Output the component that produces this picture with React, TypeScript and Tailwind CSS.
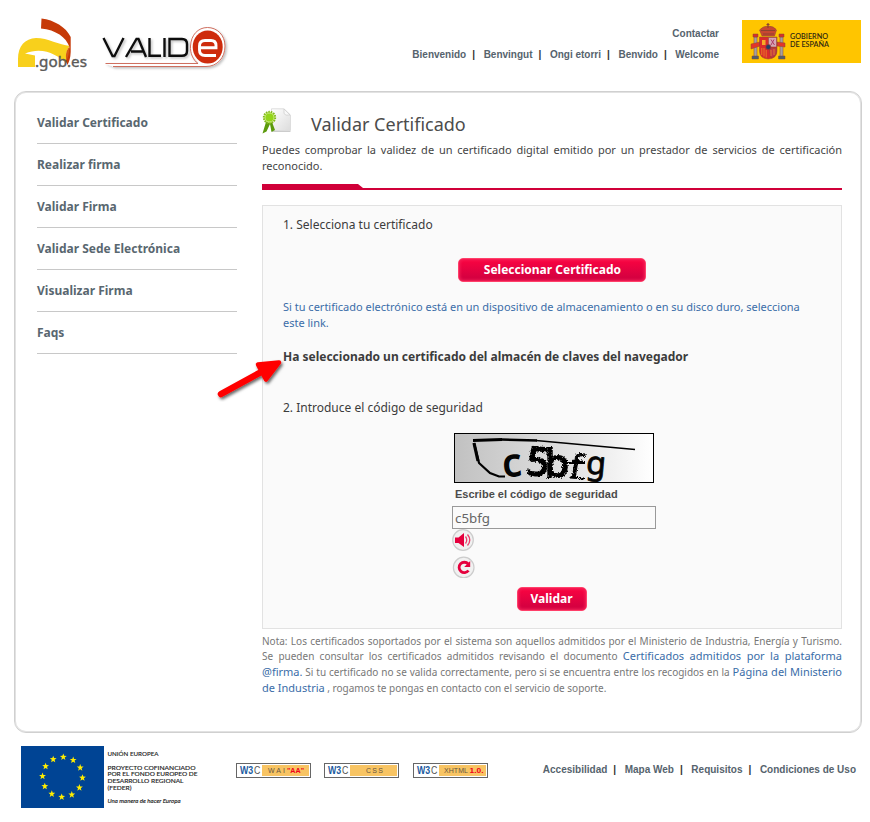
import React from "react";

const menu = ["Validar Certificado", "Realizar firma", "Validar Firma", "Validar Sede Electrónica", "Visualizar Firma", "Faqs"];
const sans = "font-['Noto_Sans',sans-serif]";
const arial = "font-['Liberation_Sans',Arial,sans-serif]";

function GobLogo() {
  return (
    <svg width="72" height="54" viewBox="16 17 72 54" className="block">
      <path d="M18 67 L18 59 C18 46 25 38.500 36 38 C48 38 59 45 70 46 C66 50 65.500 56 66.500 63 C57 55 43 46 25 53.500 L35 55.500 L35 67Z" fill="#f8d01c" />
      <path d="M41.500 18.500 C54 20 66 27 70.700 37 V52 C70.500 58 69 62 67.500 65 L65.800 61 L69.500 47 C66 37 56 30 41 28.500Z" fill="#c63a08" />
      <path d="M69.500 46.500 C65.500 51 65.500 56 66.500 61 L68.500 55Z" fill="#d75a12" />
      <text x="35" y="66.500" fontSize="15" textLength="52" lengthAdjust="spacingAndGlyphs" fill="#5b5a58" stroke="#5b5a58" strokeWidth="0.400" fontFamily="Noto Sans">.gob.es</text>
    </svg>
  );
}

function ValideLogo() {
  return (
    <svg width="128" height="50" viewBox="102 24 128 50" className="block">
      <defs>
        <filter id="logoShadow" x="-20%" y="-20%" width="150%" height="150%"><feDropShadow dx="1.500" dy="1.500" stdDeviation="0.800" floodOpacity="0.250" /></filter>
      </defs>
      <g filter="url(#logoShadow)">
        <path d="M105.500 63.500 H199 L194 57 C191 53 190 50 190 46 C190 35 197 28 207.500 28 C218 28 225 36 225 46 C225 58 218 66.500 207 66.500 H113" fill="#fff" stroke="none" />
        <path d="M105.500 63.500 H198 M198 63.500 C193 60 190 53 190.500 46 C191 35 198 27.500 207.500 27.500 C217 27.500 225 35 225 46 C225 58 217 66.500 206 66.500 H113" fill="none" stroke="#c9604f" strokeWidth="0.900" />
        <g fill="none" stroke="#111" strokeWidth="2.400">
          <path d="M103.500 38 L112.500 56 H114.500 L123.500 38" />
          <path d="M126 57 L136.500 39 H138.500 L146 57 M131 51.500 H143" />
          <path d="M149.500 38 V55.800 H161 M164.500 38 V57 M169.500 39 H182 Q187 39 187 44 V51 Q187 55.800 182 55.800 H169.500Z" />
        </g>
      </g>
      <ellipse cx="207.700" cy="47" rx="15" ry="16.500" fill="#ce2c0d" />
      <path d="M200 47.800 H216 V45.500 Q216 40.500 211 40.500 H205 Q199.500 40.500 199.500 46 V50 Q199.500 55.500 205 55.500 H216" fill="none" stroke="#fff" strokeWidth="2.900" />
    </svg>
  );
}

function SpainLogo() {
  return (
    <svg width="119" height="43" viewBox="0 0 119 43" className="block bg-[#ffc500]">
      <g stroke="#8b4932" strokeWidth="0.500">
        <path d="M12 17 H15 V37 H12Z M38 17 H41 V37 H38Z" fill="#a6a0a0" />
        <path d="M10 36 H16.500 V39 H10Z M36.500 36 H43 V39 H36.500Z" fill="#4d606d" />
        <path d="M11 14 H16 V17 H11Z M37 14 H42 V17 H37Z" fill="#d63029" />
        <path d="M9 24 L18 22 V26 L9 29Z M35 22 L43 23 V27 L35 26Z" fill="#e33627" />
        <path d="M17.500 17 H35 V31 Q35 38.500 26.200 39 Q17.500 38.500 17.500 31Z" fill="#d92b2c" />
        <path d="M26.500 17.500 H34.500 V27 H26.500Z" fill="#d5a6b5" />
        <path d="M27 28 H34.500 V32 Q34 36 29 38Z" fill="#c13945" />
        <path d="M20 16 L17.500 10 Q21 6 26 6 Q32 6 34.500 10 L32.500 16Z" fill="#c84730" />
      </g>
      <path d="M26 3 V8 M24.500 4.500 H27.500 M19 10.500 H33 M21 14 H32" stroke="#8d432e" strokeWidth="1.200" />
      <path d="M20 20 H23.500 V25 H20Z" fill="#f8a927" />
      <path d="M29 19.500 L32.500 25 M32 19.500 L29 25" stroke="#b03b64" />
      <path d="M19.800 28 V35 M22 28 V36.500 M24.200 30 V37.500 M29 30 V36 M32 29 V35" stroke="#f19a23" strokeWidth="0.700" />
      <circle cx="26.300" cy="27" r="2.500" fill="#213f67" stroke="#a43534" strokeWidth="0.700" />
      <g fontFamily="Lato" fontSize="6.800" fontWeight="600" fill="#302812">
        <text x="48" y="19" textLength="38" lengthAdjust="spacingAndGlyphs">GOBIERNO</text>
        <text x="48" y="26.700" textLength="39" lengthAdjust="spacingAndGlyphs">DE ESPAÑA</text>
      </g>
    </svg>
  );
}

function CertificateIcon() {
  return (
    <svg width="30" height="28" viewBox="0 0 30 28" className="block">
      <defs><linearGradient id="paper" x1="0" y1="0" x2="1" y2="1"><stop stopColor="#fff" /><stop offset="1" stopColor="#dcdcdc" /></linearGradient></defs>
      <path d="M9.500 .8 H22 L28.500 7 V22.500 H9.500Z" fill="url(#paper)" stroke="#ddd" />
      <path d="M22 1 V5.500 Q23 8 28 7Z" fill="#f8f8f8" stroke="#ccc" strokeWidth="0.700" />
      <path d="M10 23.500 H28.500" stroke="#ccc" />
      <path d="M4 14 L.5 25.500 L4.500 23.500 L8 16 L9.500 24 L13 22 L10 14Z" fill="#5b9a0c" />
      <circle cx="7.500" cy="9.500" r="5.700" fill="#cbec82" stroke="#83b91c" strokeWidth="2" strokeDasharray="1.500 1" />
      <circle cx="7.500" cy="9.500" r="4" fill="#94d51b" />
    </svg>
  );
}

function Captcha() {
  return (
    <svg width="200" height="50" viewBox="0 0 200 50" className="block overflow-visible">
      <defs>
        <linearGradient id="cap"><stop stopColor="#c1c1c1" /><stop offset="0.500" stopColor="#ddd" /><stop offset="1" stopColor="#fff" /></linearGradient>
        <filter id="rough" x="-20%" y="-20%" width="140%" height="140%"><feTurbulence type="fractalNoise" baseFrequency="0.700" numOctaves="2" seed="4" /><feDisplacementMap in="SourceGraphic" scale="4" xChannelSelector="R" yChannelSelector="G" /></filter>
      </defs>
      <rect x="0.500" y="0.500" width="199" height="49" fill="url(#cap)" stroke="#000" />
      <path d="M19 7.500 L48 6.500" stroke="#000" strokeWidth="3.200" />
      <path d="M47 6.500 L83 7.500" stroke="#000" strokeWidth="2.500" />
      <path d="M82 7.500 L181 16.500" stroke="#000" strokeWidth="1.700" />
      <path d="M20 10 L25 30 L36 40 L45 43.500 H51" fill="none" stroke="#000" strokeWidth="2.200" />
      <path d="M20 10 L24 28" stroke="#000" strokeWidth="3.200" />
      <g fontFamily="Noto Sans" fill="#050505" stroke="#050505">
        <text x="49" y="43" fontSize="38" strokeWidth="1.600" transform="rotate(-4 58 35)">c</text>
        <g filter="url(#rough)">
          <text x="73" y="42" fontSize="39" strokeWidth="2" transform="rotate(6 81 28)">5</text>
          <text x="91" y="44" fontSize="39" strokeWidth="2">b</text>
          <text x="117" y="45" fontSize="33" strokeWidth="1" transform="rotate(9 122 31)">f</text>
          <path d="M115 30 H131 M116 44.500 L131 45.500" strokeWidth="1.800" />
        </g>
        <text x="132" y="41" fontSize="32" strokeWidth="0.800" transform="rotate(5 140 36)">g</text>
      </g>
    </svg>
  );
}

function RoundIcon({ refresh = false }: { refresh?: boolean }) {
  return (
    <svg width="23" height="22" viewBox="0 0 23 22" className="block">
      <g transform={refresh ? "translate(0.700 0.500)" : undefined}>
        <circle cx="11" cy="11" r="10.300" fill="#f1f1f1" stroke="#ccc" strokeWidth="1.200" />
        {refresh ? (
          <><path d="M15.500 7.500 A5.200 5.200 0 1 0 15.800 14" fill="none" stroke="#e5003d" strokeWidth="2.800" /><path d="M17.500 4.500 V10.500 H11.500Z" fill="#e5003d" /></>
        ) : (
          <><path d="M3 8.500 H6.500 L12 4 V18 L6.500 14 H3Z" fill="#e5003d" /><path d="M13.500 7.500 Q16 11 13.500 14.500 M15.500 5.500 Q20 11 15.500 16.500" fill="none" stroke="#ea3f6b" strokeWidth="1.300" /></>
        )}
      </g>
    </svg>
  );
}

function RedButton({ label, size }: { label: string; size: string }) {
  return <button className={`${size} block h-6 rounded-[5px] border border-[#ff3f69] bg-linear-to-b from-[#fb0441] to-[#ce0040] text-[12px] leading-[20px] font-bold text-white shadow-[inset_0_0_3px_1px_#f6245a]`}>{label}</button>;
}

function EuropeLogo() {
  return (
    <svg width="182" height="62" viewBox="0 0 182 62" className="block">
      <rect width="83" height="62" fill="#004494" />
      {Array.from({ length: 12 }, (_, i) => {
        const a = (i * Math.PI) / 6 + 0.040;
        return <path key={i} transform={`translate(${41.5 + 20 * Math.sin(a)} ${31 - 20 * Math.cos(a)})`} d="M0 -3.600 L.9 -1.200 L3.400 -1.100 L1.400 .5 L2.100 3 L0 1.600 L-2.100 3 L-1.400 .5 L-3.400 -1.100 L-.9 -1.200Z" fill="#ffed00" />;
      })}
      <g fontFamily="Lato" fontSize="6.400" fontWeight="400" fill="#222" stroke="#222" strokeWidth="0.150">
        <text x="86.500" y="10" textLength="51" lengthAdjust="spacingAndGlyphs">UNIÓN EUROPEA</text>
        <text x="86.500" y="23.500" textLength="88" lengthAdjust="spacingAndGlyphs">PROYECTO COFINANCIADO</text>
        <text x="86.500" y="30.200" textLength="90" lengthAdjust="spacingAndGlyphs">POR EL FONDO EUROPEO DE</text>
        <text x="86.500" y="37" textLength="76" lengthAdjust="spacingAndGlyphs">DESARROLLO REGIONAL</text>
        <text x="86.500" y="43.700" textLength="24" lengthAdjust="spacingAndGlyphs">(FEDER)</text>
        <text x="86.500" y="56.800" fontSize="6.200" fontStyle="italic" textLength="73" lengthAdjust="spacingAndGlyphs">Una manera de hacer Europa</text>
      </g>
    </svg>
  );
}

function Badge({ word, red, x, width, redX = 0, redWidth = 0 }: { word: string; red?: string; x: number; width: number; redX?: number; redWidth?: number }) {
  return (
    <svg width="75" height="15" viewBox="0 0 75 15" className="block">
      <rect x="0.500" y="0.500" width="74" height="14" fill="#fff" stroke="#666" />
      <rect x="26" y="2" width="47" height="11" fill="#f8c463" />
      <g fontFamily="Liberation Sans">
        <g transform="translate(4 11.300) scale(0.800 1)" fontSize="11">
          <text fontWeight="700" fill="#1c5ba0">W3</text>
          <text x="17.500" fill="#555">C</text>
        </g>
        <text x={x} y="10" fontSize="7" fill="#665540" textLength={width}>{word}</text>
        {red && <text x={redX} y="10" fontSize="7" fontWeight="700" fill="#f00018" textLength={redWidth} lengthAdjust="spacingAndGlyphs">{red}</text>}
      </g>
    </svg>
  );
}

function LinkRow({ items }: { items: string[] }) {
  return (
    <div className="flex whitespace-pre">
      {items.map((item, i) => (
        <React.Fragment key={item}>
          <a>{item}</a>
          {i < items.length - 1 && <span className="w-[17.400px] pl-[6px] text-[#333]">|</span>}
        </React.Fragment>
      ))}
    </div>
  );
}

function Line({ children }: { children: React.ReactNode }) {
  return <div className="h-4 whitespace-nowrap [text-align-last:justify]">{children}</div>;
}

export default function App() {
  return (
    <div className={`${sans} relative h-[822px] w-[870px] overflow-hidden bg-white text-[#3c3c3c]`}>
      <header className="flex h-[91px] pl-4">
        <div className="pt-[17px]"><GobLogo /></div>
        <div className="ml-[14px] pt-6"><ValideLogo /></div>
        <div className={`${arial} ml-auto flex flex-col items-end pt-[23px] text-[10px] leading-[21px] font-bold text-[#56636d]`}>
          <a>Contactar</a>
          <LinkRow items={["Bienvenido", "Benvingut", "Ongi etorri", "Benvido", "Welcome"]} />
        </div>
        <div className="mr-[9px] ml-[23px] pt-5"><SpainLogo /></div>
      </header>

      <div className="ml-[14px] flex h-[642px] w-[848px] rounded-[12px] border border-[#d0d0d0] pt-[10px] pl-[22px] shadow-[inset_0_0_0_1px_#e2e2e2]">
        <nav className="w-[200px]">
          {menu.map((m) => <a key={m} className="block h-[42px] border-b border-[#c8c8c8] text-[12px] leading-[41px] font-bold text-[#596770]">{m}</a>)}
        </nav>
        <main className="ml-[25px] w-[580px]">
          <div className="flex h-10 pt-[6px]">
            <CertificateIcon />
            <h1 className="ml-[19px] text-[18px] leading-[33px] text-[#4c4c4c]">Validar Certificado</h1>
          </div>
          <div className="text-[11px] leading-4 text-[#444]">
            <Line>Puedes comprobar la validez de un certificado digital emitido por un prestador de servicios de certificación</Line>
            <div>reconocido.</div>
          </div>
          <svg width="580" height="6" className="mt-[10px] block"><path d="M0 0 H96 L101 4 H580 V6 H0Z" fill="#d00039" /></svg>

          <section className="mt-[15px] flex h-[424px] flex-col border border-[#e2e2e2] bg-[#fafafa] pl-5 text-[12px]">
            <div className="h-[52px] pt-[10px] leading-[18px]">1. Selecciona tu certificado</div>
            <div className="pl-[175.400px]"><RedButton label="Seleccionar Certificado" size="w-[188px]" /></div>
            <div className="mt-[17px] text-[11px] leading-4 text-[#3a6da8]">Si tu certificado electrónico está en un dispositivo de almacenamiento o en su disco duro, selecciona<br />este link.</div>
            <div className="mt-[17px] leading-[18px] font-bold">Ha seleccionado un certificado del almacén de claves del navegador</div>
            <div className="mt-[33px] leading-[18px]">2. Introduce el código de seguridad</div>
            <div className="mt-4 pl-[171px]"><Captcha /></div>
            <label className={`${arial} mt-[3px] pl-[172px] text-[11px] leading-4 font-bold text-[#4c4c4c]`}>Escribe el código de seguridad</label>
            <div className="mt-1 ml-[169px] h-[23px] w-[204px] border border-[#999] bg-[#fafafa] pl-[2px] text-[13.333px] leading-[22px] text-[#666]">c5bfg</div>
            <div className="mt-0 flex flex-col gap-[5px] pl-[169px]"><RoundIcon /><RoundIcon refresh /></div>
            <div className="mt-[9px] pl-[233.500px]"><RedButton label="Validar" size="w-[70px]" /></div>
          </section>

          <div className="mt-1 text-[10px] leading-4 text-[#777] [&_a]:text-[11px] [&_a]:leading-none [&_a]:text-[#3a6da8]">
            <div className="h-[15px]"><Line>Nota: Los certificados soportados por el sistema son aquellos admitidos por el Ministerio de Industria, Energía y Turismo.</Line></div>
            <Line>Se pueden consultar los certificados admitidos revisando el documento <a>Certificados admitidos por la plataforma</a></Line>
            <Line><a>@firma.</a> Si tu certificado no se valida correctamente, pero si se encuentra entre los recogidos en la <a>Página del Ministerio</a></Line>
            <div><a>de Industria</a> , rogamos te pongas en contacto con el servicio de soporte.</div>
          </div>
        </main>
      </div>

      <footer className="flex pt-[13px] pr-[14px] pl-[21px]">
        <EuropeLogo />
        <div className="ml-[33px] flex gap-[13px] pt-[17px]">
          <Badge word="WAI" red={'"AA"'} x={32} width={17} redX={51} redWidth={17} />
          <Badge word="CSS" x={42} width={17} />
          <div className="ml-[1px]"><Badge word="XHTML" red="1.0." x={31} width={24} redX={56.5} redWidth={14} /></div>
        </div>
        <div className={`${arial} ml-auto pt-[13px] text-[10px] leading-[21px] font-bold text-[#56636d]`}>
          <LinkRow items={["Accesibilidad", "Mapa Web", "Requisitos", "Condiciones de Uso"]} />
        </div>
      </footer>

      <svg width="76" height="48" viewBox="214 354 76 48" className="absolute top-[354px] left-[214px]">
        <defs><filter id="arrowShadow" x="-20%" y="-20%" width="150%" height="160%"><feDropShadow dx="1.500" dy="2" stdDeviation="1.500" floodOpacity="0.600" /></filter></defs>
        <g filter="url(#arrowShadow)">
          <path d="M221 394 L263 371" stroke="#f00" strokeWidth="6.500" strokeLinecap="round" />
          <path d="M258 364.500 L279 362.500 L266 379.500Z" fill="#f00" stroke="#f00" strokeWidth="4.500" strokeLinejoin="round" />
        </g>
      </svg>
    </div>
  );
}
